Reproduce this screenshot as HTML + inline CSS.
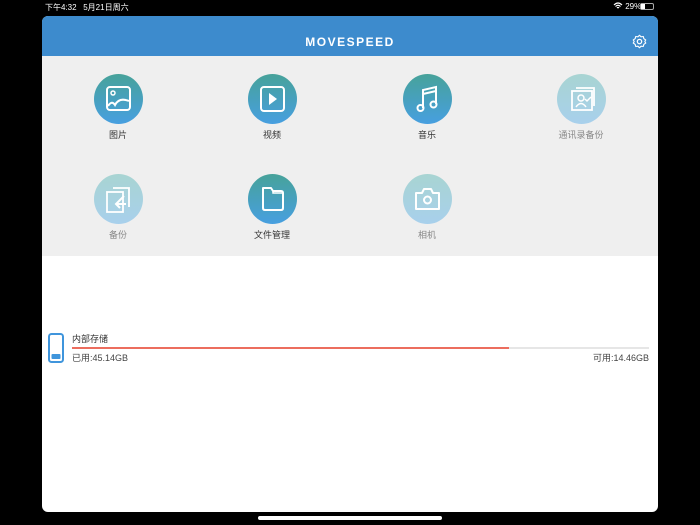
<!DOCTYPE html>
<html><head><meta charset="utf-8"><style>
*{margin:0;padding:0;box-sizing:border-box}
body{width:700px;height:525px;background:#000;position:relative;overflow:hidden;font-family:"Liberation Sans","Noto Sans CJK SC",sans-serif}
.st{position:absolute;top:2px;color:#fff;font-size:8px}
.card{position:absolute;left:42px;top:16px;width:616px;height:496px;background:#fff;border-radius:6px;overflow:hidden}
.hd{height:40px;background:#3d8bcd;position:relative;color:#fff}
.hd .t{position:absolute;left:0;right:0;top:19px;text-align:center;font-weight:bold;font-size:12px;letter-spacing:1.5px}
.grey{height:200px;background:#efefef;position:relative}
.ic{position:absolute;width:49px;height:50px;border-radius:50%;background:linear-gradient(#47a29a,#479fe0)}
.ic.f{background:linear-gradient(#a8d4d2,#a8d0ec)}
.ic svg{position:absolute;left:0;top:0}
.lb{position:absolute;width:100px;text-align:center;font-size:9px;color:#333}
.lb.f{color:#888}
</style></head><body>
<div class="st" style="left:45px">下午4:32 &nbsp; 5月21日周六</div>
<div class="st" style="left:613px">
<svg width="10" height="8" viewBox="0 0 10 8" style="vertical-align:-1px"><path d="M1 3Q5 -1 9 3M2.5 4.5Q5 2 7.5 4.5M4 6Q5 5 6 6" stroke="#fff" stroke-width="1.2" fill="none"/></svg> 29%</div>
<div style="position:absolute;left:640px;top:3px;width:14px;height:7px;border:1px solid #aaa;border-radius:2px"><div style="width:4px;height:5px;background:#fff"></div></div>
<div class="card">
<div class="hd"><div class="t">MOVESPEED</div>
<svg style="position:absolute;left:590px;top:18px" width="15" height="15" viewBox="0 0 24 24"><circle cx="12" cy="12" r="3.5" stroke="#fff" stroke-width="2" fill="none"/><path d="M12 2l2.5 2.5 3.5-.5 1 3.5 3 2-1.5 2.5 1.5 2.5-3 2-1 3.5-3.5-.5L12 22l-2.5-2.5-3.5.5-1-3.5-3-2L3.5 12 2 9.5l3-2 1-3.5 3.5.5z" stroke="#fff" stroke-width="1.8" fill="none" stroke-linejoin="round"/></svg></div>
<div class="grey">
<div class="ic" style="left:52px;top:18px"><svg width="49" height="50" viewBox="0 0 49 50"><rect x="13" y="13" width="23" height="23" rx="3" stroke="#fff" stroke-width="2" fill="none"/><circle cx="19" cy="19" r="2" stroke="#fff" stroke-width="1.5" fill="none"/><path d="M14 32q4-6 7-1q4-8 14-4" stroke="#fff" stroke-width="2" fill="none"/></svg></div>
<div class="lb" style="left:26px;top:72px">图片</div>
<div class="ic" style="left:206px;top:18px"><svg width="49" height="50" viewBox="0 0 49 50"><rect x="13" y="13" width="23" height="24" rx="3" stroke="#fff" stroke-width="2" fill="none"/><path d="M21 19l8 6-8 6z" fill="#fff"/></svg></div>
<div class="lb" style="left:180px;top:72px">视频</div>
<div class="ic" style="left:361px;top:18px"><svg width="49" height="50" viewBox="0 0 49 50"><path d="M20 34V16l13-3v17" stroke="#fff" stroke-width="2" fill="none"/><path d="M20 20l13-3" stroke="#fff" stroke-width="2"/><circle cx="17.5" cy="34" r="3" stroke="#fff" stroke-width="2" fill="none"/><circle cx="30.5" cy="30.5" r="3" stroke="#fff" stroke-width="2" fill="none"/></svg></div>
<div class="lb" style="left:335px;top:72px">音乐</div>
<div class="ic f" style="left:515px;top:18px"><svg width="49" height="50" viewBox="0 0 49 50"><rect x="15" y="17" width="20" height="19" stroke="#fff" stroke-width="1.8" fill="none"/><path d="M19 14h18v18" stroke="#fff" stroke-width="1.8" fill="none"/><circle cx="24" cy="24" r="3" stroke="#fff" stroke-width="1.5" fill="none"/><path d="M19 33q5-7 10 0M28 25l2 2 4-4" stroke="#fff" stroke-width="1.5" fill="none"/></svg></div>
<div class="lb f" style="left:489px;top:72px">通讯录备份</div>
<div class="ic f" style="left:52px;top:118px"><svg width="49" height="50" viewBox="0 0 49 50"><rect x="13" y="18" width="16" height="20" stroke="#fff" stroke-width="1.8" fill="none"/><path d="M19 14h16v19" stroke="#fff" stroke-width="1.8" fill="none"/><path d="M30 22l-8 8 4 4M22 30h10" stroke="#fff" stroke-width="2" fill="none"/></svg></div>
<div class="lb f" style="left:26px;top:172px">备份</div>
<div class="ic" style="left:206px;top:118px"><svg width="49" height="50" viewBox="0 0 49 50"><path d="M15 14h8l2 3h8q2 0 2 2v15q0 2-2 2H17q-2 0-2-2z" stroke="#fff" stroke-width="2" fill="none" stroke-linejoin="round"/><path d="M25 17v2h10" stroke="#fff" stroke-width="1.5" fill="none"/></svg></div>
<div class="lb" style="left:180px;top:172px">文件管理</div>
<div class="ic f" style="left:361px;top:118px"><svg width="49" height="50" viewBox="0 0 49 50"><path d="M13 19h6l2-4h7l2 4h6v16H13z" stroke="#fff" stroke-width="2" fill="none" stroke-linejoin="round"/><circle cx="24.5" cy="26" r="3.5" stroke="#fff" stroke-width="2" fill="none"/></svg></div>
<div class="lb f" style="left:335px;top:172px">相机</div>
</div>
<svg style="position:absolute;left:6px;top:317px" width="16" height="30" viewBox="0 0 16 30"><rect x="1" y="1" width="14" height="28" rx="2.5" stroke="#3f95dc" stroke-width="2" fill="none"/><rect x="3.5" y="21" width="9" height="5" rx="1" fill="#3f95dc"/></svg>
<div style="position:absolute;left:30px;top:316px;font-size:9px;color:#333">内部存储</div>
<div style="position:absolute;left:30px;top:331px;width:577px;height:2px;background:#e6e6e6"><div style="width:437px;height:2px;background:#ec6d5e"></div></div>
<div style="position:absolute;left:30px;top:335px;font-size:9px;color:#444">已用:45.14GB</div>
<div style="position:absolute;right:9px;top:335px;font-size:9px;color:#444">可用:14.46GB</div>
</div>
<div style="position:absolute;left:258px;top:516px;width:184px;height:4px;border-radius:2px;background:#fff"></div>
</body></html>
